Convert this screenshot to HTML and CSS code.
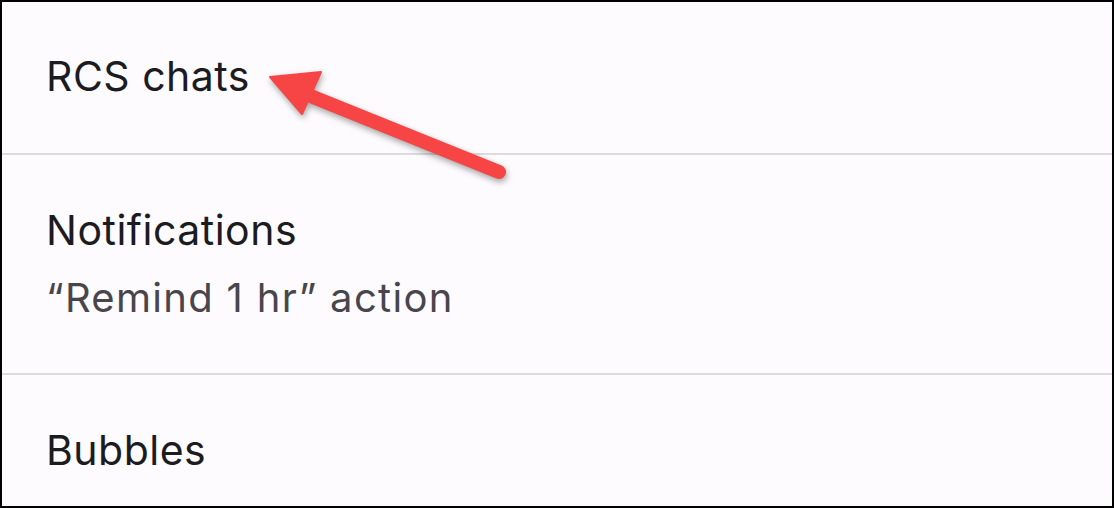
FILE: index.html
```html
<!DOCTYPE html>
<html>

<head>
  <title>Chat settings</title>
  <link rel="stylesheet" href="styles.css">
</head>

<body>
  <div class="screen">
    <ul class="settings">
      <li class="row">
        <div class="row-title">RCS chats</div>
      </li>
      <li class="row">
        <div class="row-title">Notifications</div>
        <div class="row-sub">“Remind 1 hr” action</div>
      </li>
      <li class="row">
        <div class="row-title">Bubbles</div>
      </li>
    </ul>

    <!-- callout arrow pointing at the first item -->
    <svg class="callout" width="1114" height="508" viewBox="0 0 1114 508">
      <line x1="308" y1="95" x2="499" y2="172" stroke="#f74545" stroke-width="14" stroke-linecap="round" />
      <polygon points="270,77 321,72 302,114" fill="#f74545" stroke="#f74545" stroke-width="2" stroke-linejoin="round" />
    </svg>
  </div>
</body>

</html>
```

FILE: styles.css
```css
body {
  margin: 0;
  font-family: Inter, Roboto, "Noto Sans", Arial, sans-serif;
  background: #fdfbfe;
}

.screen {
  position: relative;
  width: 1114px;
  height: 508px;
  box-sizing: border-box;
  border: 2px solid #000;
  background: #fdfbfe;
  overflow: hidden;
}

.settings {
  list-style-type: none;
  margin: 0;
  padding: 0;
}

.row {
  display: flex;
  flex-direction: column;
  justify-content: center;
  height: 153px;
  padding: 0 44px 3px;
  box-sizing: border-box;
  border-bottom: 2px solid #dcdbde;
}

.row:nth-child(2) {
  height: 220px;
  padding-top: 6px;
  padding-bottom: 0;
}

.row:last-child {
  border-bottom: none;
}

.row-title {
  font-size: 41px;
  line-height: 54px;
  letter-spacing: 0.5px;
  color: #1c1b1f;
}

.row-sub {
  margin-top: 8px;
  font-size: 40px;
  line-height: 66px;
  letter-spacing: 1.3px;
  color: #48464c;
}

.callout {
  position: absolute;
  left: -2px;
  top: -2px;
  filter: drop-shadow(1px 3px 3px rgba(0, 0, 0, 0.35));
}
```
